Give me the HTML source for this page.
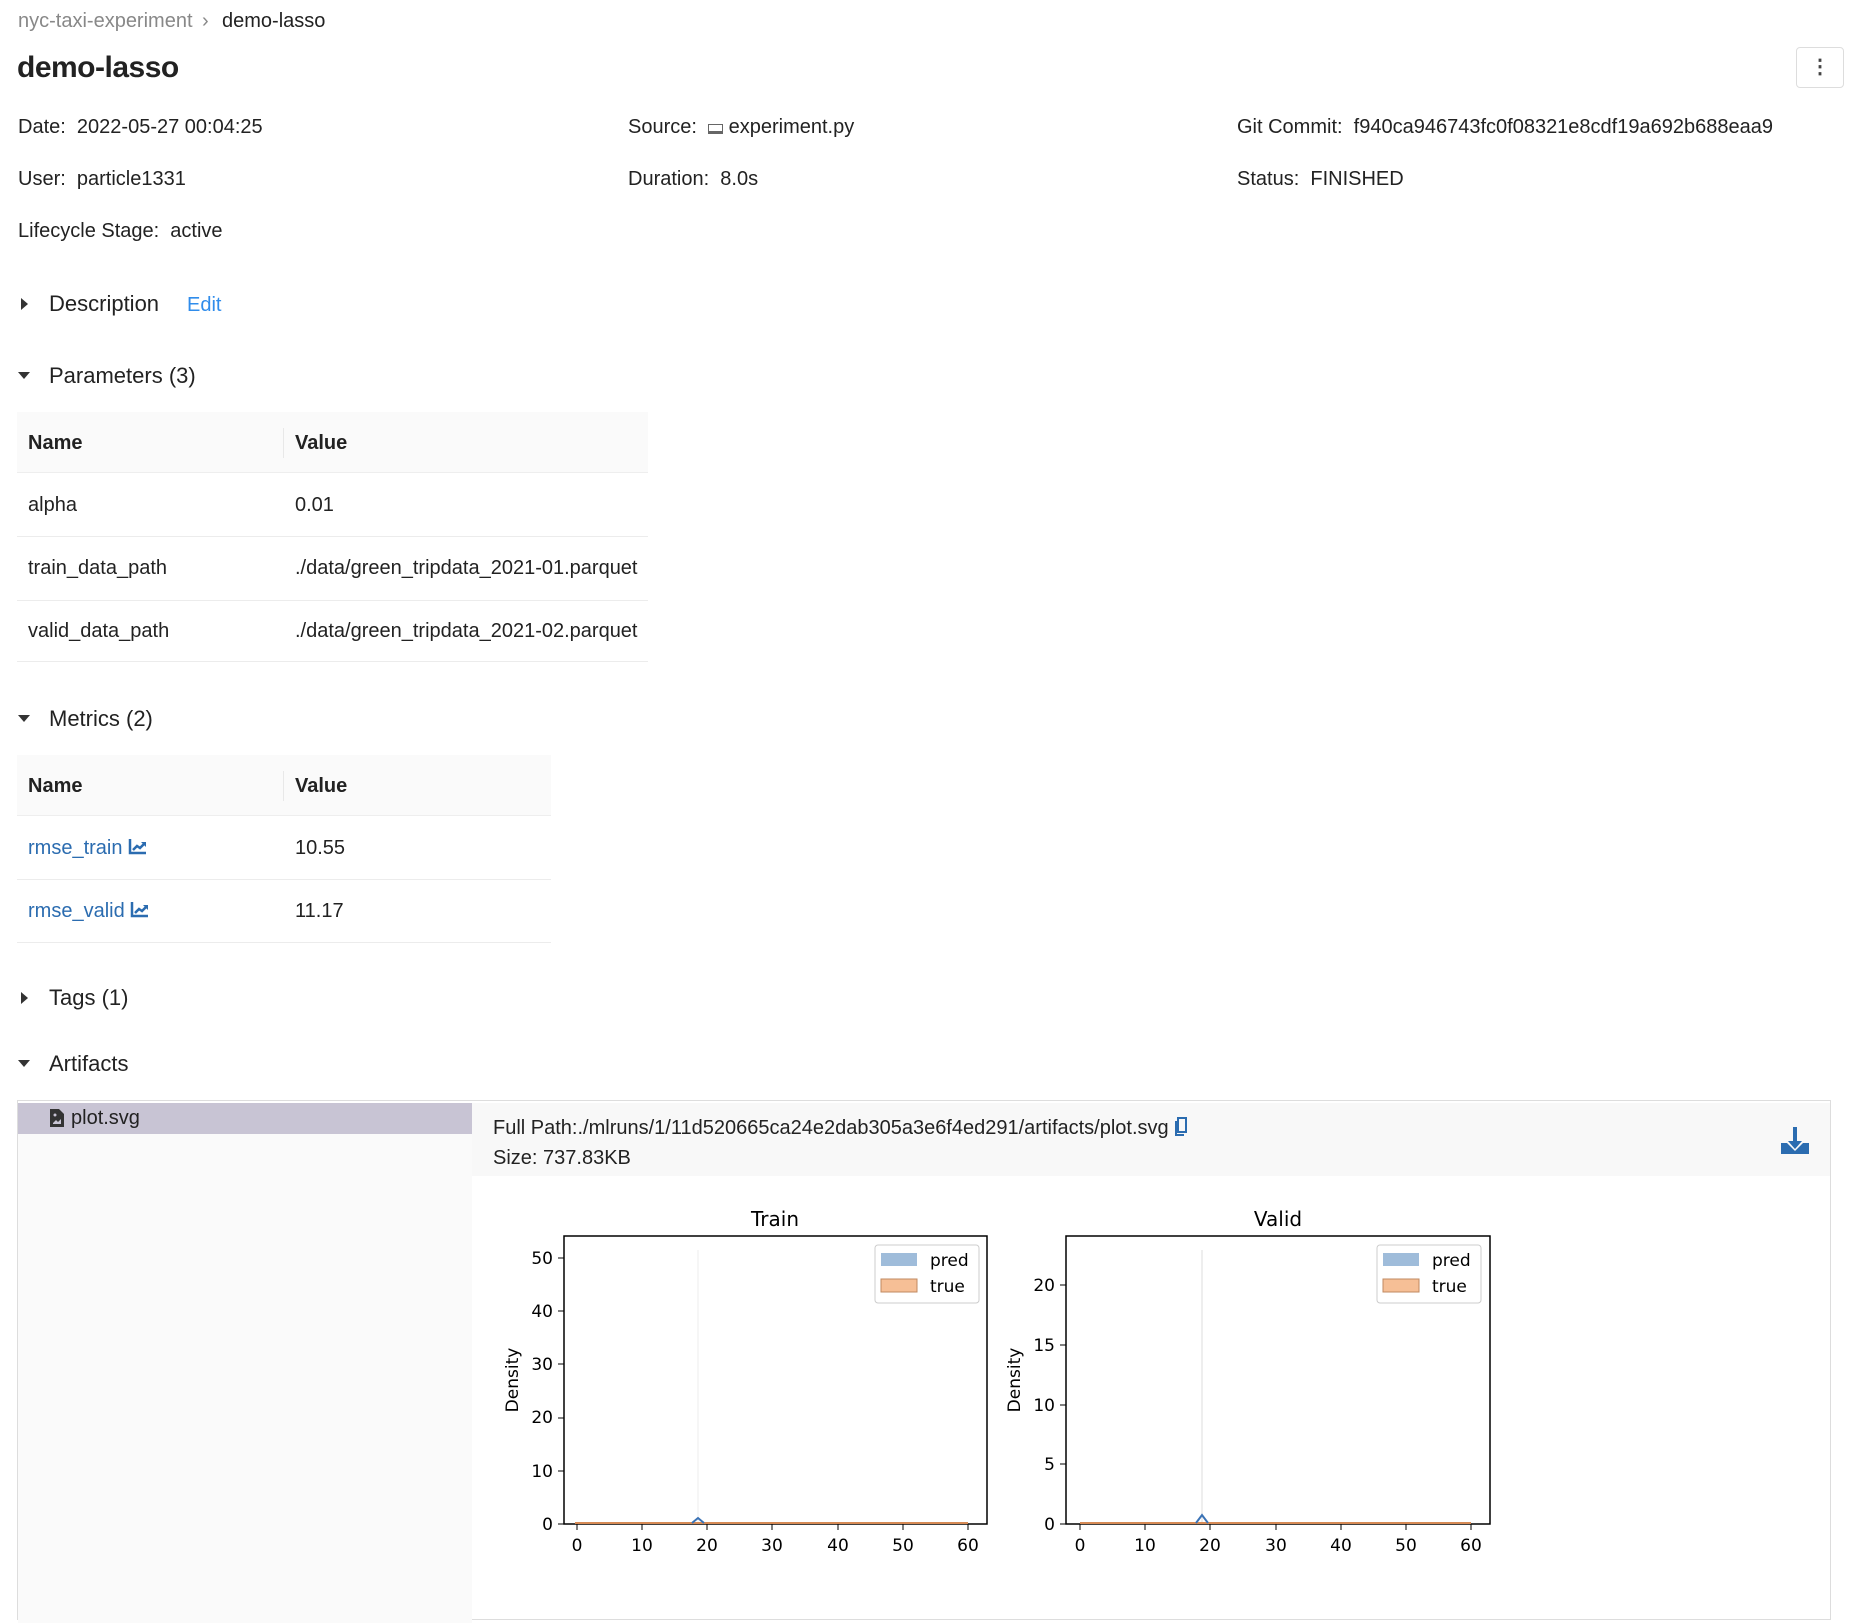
<!DOCTYPE html>
<html><head><meta charset="utf-8"><style>
*{margin:0;padding:0;box-sizing:border-box}
body{width:1858px;height:1570px;overflow:hidden;background:#fff;font-family:"Liberation Sans",sans-serif;color:#222;font-size:20px;position:relative}
.a{position:absolute;white-space:nowrap}
.sec{font-size:22px;color:#222}
.tri-r{position:absolute;width:0;height:0;border-top:6px solid transparent;border-bottom:6px solid transparent;border-left:7px solid #333}
.tri-d{position:absolute;width:0;height:0;border-left:6px solid transparent;border-right:6px solid transparent;border-top:7px solid #333}
.th{position:absolute;background:#fafafa;border-bottom:1px solid #eee}
.hr{position:absolute;height:1px;background:#ececec}
.link{color:#2b6cb0}
</style></head><body>
<div class="a" style="left:18px;top:10px;color:#888">nyc-taxi-experiment</div>
<div class="a" style="left:202px;top:10px;color:#888">›</div>
<div class="a" style="left:222px;top:10px;color:#222">demo-lasso</div>
<div class="a" style="left:17px;top:51px;font-size:30px;font-weight:bold;letter-spacing:-0.5px">demo-lasso</div>
<div class="a" style="left:1796px;top:47px;width:48px;height:41px;border:1px solid #ddd;border-radius:4px;text-align:center;line-height:38px;font-weight:bold;color:#444">⋮</div>

<div class="a" style="left:18px;top:116px">Date:&nbsp; 2022-05-27 00:04:25</div>
<div class="a" style="left:628px;top:116px">Source:&nbsp; <span style="display:inline-block;width:15px;height:10px;border:1.5px solid #666;border-bottom-width:3px;vertical-align:-1px"></span> experiment.py</div>
<div class="a" style="left:1237px;top:116px">Git Commit:&nbsp; f940ca946743fc0f08321e8cdf19a692b688eaa9</div>
<div class="a" style="left:18px;top:168px">User:&nbsp; particle1331</div>
<div class="a" style="left:628px;top:168px">Duration:&nbsp; 8.0s</div>
<div class="a" style="left:1237px;top:168px">Status:&nbsp; FINISHED</div>
<div class="a" style="left:18px;top:220px">Lifecycle Stage:&nbsp; active</div>

<div class="tri-r" style="left:21px;top:298px"></div>
<div class="a sec" style="left:49px;top:291px">Description</div>
<div class="a" style="left:187px;top:294px;color:#2f8ceb">Edit</div>

<div class="tri-d" style="left:18px;top:372px"></div>
<div class="a sec" style="left:49px;top:363px">Parameters (3)</div>
<div class="th" style="left:17px;top:412px;width:631px;height:61px"></div>
<div class="a" style="left:283px;top:428px;width:1px;height:30px;background:#e8e8e8"></div>
<div class="a" style="left:28px;top:432px;font-weight:bold">Name</div>
<div class="a" style="left:295px;top:432px;font-weight:bold">Value</div>
<div class="a" style="left:28px;top:494px">alpha</div><div class="a" style="left:295px;top:494px">0.01</div>
<div class="hr" style="left:17px;top:536px;width:631px"></div>
<div class="a" style="left:28px;top:557px">train_data_path</div><div class="a" style="left:295px;top:557px">./data/green_tripdata_2021-01.parquet</div>
<div class="hr" style="left:17px;top:600px;width:631px"></div>
<div class="a" style="left:28px;top:620px">valid_data_path</div><div class="a" style="left:295px;top:620px">./data/green_tripdata_2021-02.parquet</div>
<div class="hr" style="left:17px;top:661px;width:631px"></div>

<div class="tri-d" style="left:18px;top:715px"></div>
<div class="a sec" style="left:49px;top:706px">Metrics (2)</div>
<div class="th" style="left:17px;top:755px;width:534px;height:61px"></div>
<div class="a" style="left:283px;top:771px;width:1px;height:30px;background:#e8e8e8"></div>
<div class="a" style="left:28px;top:775px;font-weight:bold">Name</div>
<div class="a" style="left:295px;top:775px;font-weight:bold">Value</div>
<div class="a link" style="left:28px;top:837px">rmse_train <svg width="19" height="17" viewBox="0 0 19 17" style="vertical-align:-1px"><path d="M2 1v14h16" stroke="#2b6cb0" stroke-width="2.5" fill="none"/><path d="M5 12l4-4 3 2 5-5" stroke="#2b6cb0" stroke-width="2.5" fill="none"/><path d="M13 4h5v5z" fill="#2b6cb0"/></svg></div>
<div class="a" style="left:295px;top:837px">10.55</div>
<div class="hr" style="left:17px;top:879px;width:534px"></div>
<div class="a link" style="left:28px;top:900px">rmse_valid <svg width="19" height="17" viewBox="0 0 19 17" style="vertical-align:-1px"><path d="M2 1v14h16" stroke="#2b6cb0" stroke-width="2.5" fill="none"/><path d="M5 12l4-4 3 2 5-5" stroke="#2b6cb0" stroke-width="2.5" fill="none"/><path d="M13 4h5v5z" fill="#2b6cb0"/></svg></div>
<div class="a" style="left:295px;top:900px">11.17</div>
<div class="hr" style="left:17px;top:942px;width:534px"></div>

<div class="tri-r" style="left:21px;top:992px"></div>
<div class="a sec" style="left:49px;top:985px">Tags (1)</div>
<div class="tri-d" style="left:18px;top:1060px"></div>
<div class="a sec" style="left:49px;top:1051px">Artifacts</div>

<div class="a" style="left:17px;top:1100px;width:1814px;height:520px;border:1px solid #ddd"></div>
<div class="a" style="left:18px;top:1103px;width:454px;height:520px;background:#fafafa"></div>
<div class="a" style="left:18px;top:1103px;width:454px;height:31px;background:#c8c4d4"></div>
<svg class="a" style="left:50px;top:1109px" width="14" height="18" viewBox="0 0 14 18"><path d="M0 0h9l5 5v13H0z" fill="#333"/><path d="M3 14l3-3 2 2 3-3v5H3z" fill="#c8c4d4"/><circle cx="5" cy="6" r="1.5" fill="#c8c4d4"/></svg>
<div class="a" style="left:71px;top:1107px;color:#222">plot.svg</div>
<div class="a" style="left:472px;top:1103px;width:1358px;height:73px;background:#f8f8f8"></div>
<div class="a" style="left:493px;top:1117px">Full Path:./mlruns/1/11d520665ca24e2dab305a3e6f4ed291/artifacts/plot.svg <svg width="14" height="20" viewBox="0 0 14 20" style="vertical-align:-3px"><rect x="4" y="1" width="8" height="14" fill="none" stroke="#2b6cb0" stroke-width="2"/><path d="M2 4v14h8" fill="none" stroke="#2b6cb0" stroke-width="2"/></svg></div>
<div class="a" style="left:493px;top:1147px">Size: 737.83KB</div>
<svg class="a" style="left:1780px;top:1125px" width="30" height="30" viewBox="0 0 30 30"><path d="M13 2h4v14h5l-7 8-7-8h5z" fill="#2b6cb0"/><path d="M1 18h6l8 8 8-8h6v11H1z" fill="#2b6cb0"/></svg>

<svg class="a" style="left:0;top:0" width="1858" height="1570" font-family="DejaVu Sans, sans-serif">
<g font-size="17" fill="#000">
<text x="775" y="1226" text-anchor="middle" font-size="20">Train</text>
<text x="1278" y="1226" text-anchor="middle" font-size="20">Valid</text>
<rect x="564" y="1236" width="423" height="288" fill="none" stroke="#000" stroke-width="1.5"/>
<rect x="1066" y="1236" width="424" height="288" fill="none" stroke="#000" stroke-width="1.5"/>
<line x1="698" y1="1250" x2="698" y2="1524" stroke="#eee"/>
<line x1="1202" y1="1250" x2="1202" y2="1524" stroke="#ddd"/>
<path d="M575 1523H968" stroke="#d68a55" stroke-width="2"/>
<path d="M692 1523l6-5 6 5" stroke="#3a72b5" stroke-width="2" fill="none"/>
<path d="M1080 1523H1471" stroke="#d68a55" stroke-width="2"/>
<path d="M1196 1523l6-8 6 8" stroke="#3a72b5" stroke-width="2" fill="none"/>
<g text-anchor="end">
<text x="553" y="1264">50</text><text x="553" y="1317">40</text><text x="553" y="1370">30</text><text x="553" y="1423">20</text><text x="553" y="1477">10</text><text x="553" y="1530">0</text>
<text x="1055" y="1291">20</text><text x="1055" y="1351">15</text><text x="1055" y="1411">10</text><text x="1055" y="1470">5</text><text x="1055" y="1530">0</text>
</g>
<path d="M558 1258h6M558 1311h6M558 1364h6M558 1418h6M558 1471h6M558 1524h6M1060 1285h6M1060 1345h6M1060 1405h6M1060 1464h6M1060 1524h6" stroke="#000"/>
<path d="M577 1524v6M642 1524v6M707 1524v6M772 1524v6M838 1524v6M903 1524v6M968 1524v6M1080 1524v6M1145 1524v6M1210 1524v6M1276 1524v6M1341 1524v6M1406 1524v6M1471 1524v6" stroke="#000"/>
<g text-anchor="middle">
<text x="577" y="1551">0</text><text x="642" y="1551">10</text><text x="707" y="1551">20</text><text x="772" y="1551">30</text><text x="838" y="1551">40</text><text x="903" y="1551">50</text><text x="968" y="1551">60</text>
<text x="1080" y="1551">0</text><text x="1145" y="1551">10</text><text x="1210" y="1551">20</text><text x="1276" y="1551">30</text><text x="1341" y="1551">40</text><text x="1406" y="1551">50</text><text x="1471" y="1551">60</text>
</g>
<text transform="translate(518,1380) rotate(-90)" text-anchor="middle">Density</text>
<text transform="translate(1020,1380) rotate(-90)" text-anchor="middle">Density</text>
<rect x="875" y="1245" width="104" height="58" rx="3" fill="#fff" stroke="#ccc"/>
<rect x="881" y="1253" width="36" height="13" fill="#9fbcda"/><rect x="881" y="1279" width="36" height="13" fill="#f6bf96" stroke="#c08a60"/>
<text x="930" y="1266">pred</text><text x="930" y="1292">true</text>
<rect x="1377" y="1245" width="104" height="58" rx="3" fill="#fff" stroke="#ccc"/>
<rect x="1383" y="1253" width="36" height="13" fill="#9fbcda"/><rect x="1383" y="1279" width="36" height="13" fill="#f6bf96" stroke="#c08a60"/>
<text x="1432" y="1266">pred</text><text x="1432" y="1292">true</text>
</g>
</svg>
</body></html>
